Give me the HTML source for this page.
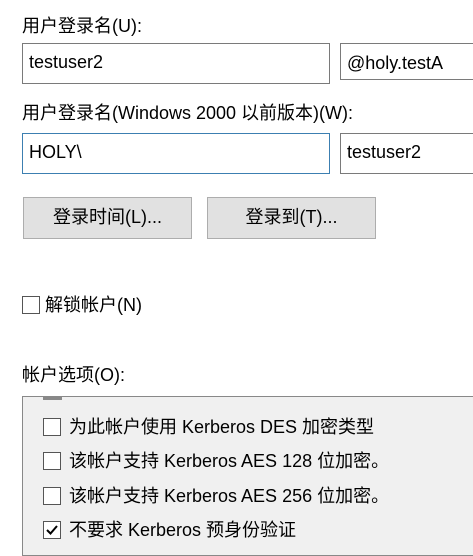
<html><head><style>
body{margin:0;width:473px;height:547px;background:#fff;overflow:hidden;position:relative;font-family:"Liberation Sans","Noto Sans CJK SC",sans-serif;font-size:18px;line-height:22px;color:#000}
.a{position:absolute;white-space:nowrap}
.in{position:absolute;border:1px solid #7a7a7a;background:#fff;box-sizing:border-box;padding:7px 0 0 6px;white-space:nowrap}
.btn{position:absolute;border:1px solid #adadad;background:#e1e1e1;box-sizing:border-box;text-align:center;line-height:39px}
.cb{position:absolute;width:18px;height:18px;border:1px solid #555;box-sizing:border-box;background:#fff}
</style></head><body>
<div class="a" style="left:22px;top:15px">用户登录名(U):</div>
<div class="in" style="left:22px;top:43px;width:308px;height:41px">testuser2</div>
<div class="in" style="left:340px;top:43px;width:140px;height:37px;padding-top:8px">@holy.testA</div>
<div class="a" style="left:22px;top:102px">用户登录名(Windows 2000 以前版本)(W):</div>
<div class="in" style="left:22px;top:133px;width:308px;height:41px;border-color:#3c7fb1">HOLY\</div>
<div class="in" style="left:340px;top:133px;width:140px;height:41px">testuser2</div>
<div class="btn" style="left:23px;top:197px;width:169px;height:42px">登录时间(L)...</div>
<div class="btn" style="left:207px;top:197px;width:169px;height:42px">登录到(T)...</div>
<div class="cb" style="left:22px;top:296px"></div>
<div class="a" style="left:45px;top:294px">解锁帐户(N)</div>
<div class="a" style="left:22px;top:364px">帐户选项(O):</div>
<div class="a" style="left:22px;top:396px;width:470px;height:160px;border:1px solid #888;background:#f0f0f0;box-sizing:border-box"></div>
<div class="a" style="left:43px;top:397px;width:19px;height:3px;background:#888"></div>
<div class="cb" style="left:43px;top:418px"></div>
<div class="a" style="left:69px;top:416px">为此帐户使用 Kerberos DES 加密类型</div>
<div class="cb" style="left:43px;top:452px"></div>
<div class="a" style="left:69px;top:450px">该帐户支持 Kerberos AES 128 位加密。</div>
<div class="cb" style="left:43px;top:487px"></div>
<div class="a" style="left:69px;top:485px">该帐户支持 Kerberos AES 256 位加密。</div>
<div class="cb" style="left:43px;top:521px"><svg width="16" height="16" style="position:absolute;left:0;top:0"><path d="M3 8L6.5 11.5L13 4" stroke="#000" stroke-width="2" fill="none"/></svg></div>
<div class="a" style="left:69px;top:519px">不要求 Kerberos 预身份验证</div>
</body></html>
